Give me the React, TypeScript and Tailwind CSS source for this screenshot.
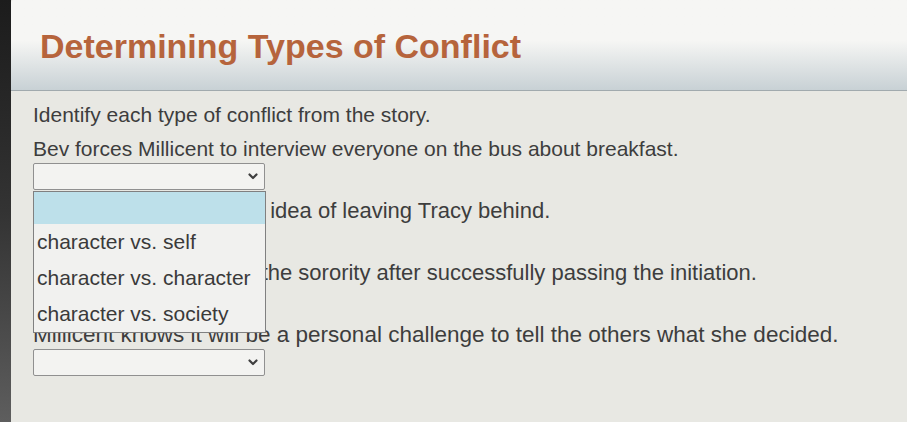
import { useState } from 'react'

const statements = [
  'Bev forces Millicent to interview everyone on the bus about breakfast.',
  'Millicent is torn over the idea of leaving Tracy behind.',
  'Millicent refuses to join the sorority after successfully passing the initiation.',
  'Millicent knows it will be a personal challenge to tell the others what she decided.',
]

// sizes follow the photo, which grows slightly toward the bottom
const statementSize = ['text-[21px]', 'text-[22px]', 'text-[22px]', 'text-[22.5px]']

const options = ['', 'character vs. self', 'character vs. character', 'character vs. society']

function Chevron() {
  return (
    <svg width="10" height="7" viewBox="0 0 10 7" className="text-[#3f3f3f]" aria-hidden="true">
      <path d="M1.5 1.5 L5 5 L8.5 1.5" fill="none" stroke="currentColor" strokeWidth="2.2" strokeLinecap="round" strokeLinejoin="round" />
    </svg>
  )
}

function ConflictSelect({ open }: { open: boolean }) {
  return (
    <div className="relative mt-[2px] w-[232px]">
      <div className="flex h-[27px] items-center justify-end rounded-[2px] border border-[#909090] bg-[#f3f3f1] pr-[6px]">
        <Chevron />
      </div>
      {open && (
        <ul className="absolute left-0 top-[28px] z-10 w-[233px] border border-[#808080] bg-[#f1f1ef]">
          {options.map((opt, i) => (
            <li
              key={i}
              className={
                i === 0
                  ? 'h-[32px] bg-[#bde0ea]'
                  : 'flex h-[36px] items-center pl-[3px] text-[21px] text-[#3a3a3a]'
              }
            >
              {opt}
            </li>
          ))}
        </ul>
      )}
    </div>
  )
}

export default function App() {
  const [openIndex] = useState(0)

  return (
    <div className="flex h-[422px] w-[907px] overflow-hidden bg-[#e8e8e3] font-['Liberation_Sans',Arial,sans-serif] text-[#3d3d3d]">
      {/* monitor bezel edge */}
      <div className="w-[11px] shrink-0 bg-gradient-to-b from-[#1c1c1c] via-[#333] to-[#5e5e5e]" />

      <div className="min-w-0 flex-1">
        <header className="h-[91px] rounded-tl-[3px] border-b border-[#a1aaae] bg-gradient-to-b from-[#f6f6f4] from-45% to-[#c8d1d5] pl-[29px] pt-[26px]">
          <h1 className="text-[34px] font-bold leading-[40px] text-[#b6643c]">Determining Types of Conflict</h1>
        </header>

        <div className="pl-[22px] pt-[12px]">
          <p className="text-[21px] leading-6">Identify each type of conflict from the story.</p>

          <div className="mt-[10px] flex flex-col gap-[9px]">
            {statements.map((s, i) => (
              <div key={i}>
                <p className={`whitespace-nowrap leading-6 ${statementSize[i]}`}>{s}</p>
                <ConflictSelect open={i === openIndex} />
              </div>
            ))}
          </div>
        </div>
      </div>
    </div>
  )
}
